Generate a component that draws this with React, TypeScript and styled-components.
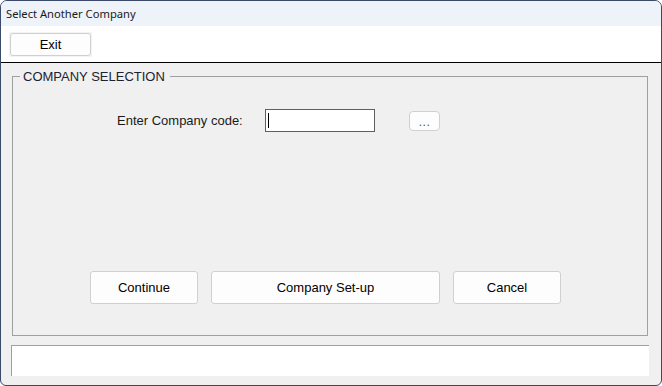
import { createGlobalStyle, styled } from "styled-components";

const GlobalStyle = createGlobalStyle`
	html, body {
		margin: 0;
		padding: 0;
		background: #ffffff;
	}
	* {
		box-sizing: border-box;
	}
`;

const Window = styled.div`
	display: flex;
	flex-direction: column;
	width: 662px;
	height: 386px;
	border: 1px solid #3b4a6b;
	border-radius: 7px 7px 6px 6px;
	overflow: hidden;
	background-color: #f0f0f0;
	font-family: "Liberation Sans", Arial, sans-serif;
	color: #000;
`;

const TitleBar = styled.div`
	display: flex;
	align-items: center;
	height: 25px;
	padding-left: 5px;
	background-color: #eef2f9;
	font-family: "Noto Sans", "Open Sans", sans-serif;
	font-size: 11.2px;
	color: #1a1a1a;
`;

const Toolbar = styled.div`
	display: flex;
	align-items: center;
	height: 37px;
	padding-left: 8px;
	background-color: #fff;
	border-bottom: 1px solid #000;
`;

const ToolButtonWrap = styled.div`
	padding: 1px;
	background-color: #f3f3f3;
`;

const Button = styled.button<{ $w: number; $h: number }>`
	display: flex;
	align-items: center;
	justify-content: center;
	width: ${(p) => p.$w}px;
	height: ${(p) => p.$h}px;
	padding: 0;
	background-color: #fdfdfd;
	border: 1px solid #d0d0d0;
	border-radius: 3px;
	font-family: "Liberation Sans", Arial, sans-serif;
	font-size: 13px;
	color: #000;
`;

const Body = styled.div`
	flex: 1;
	display: flex;
	flex-direction: column;
	padding: 7px 13px 9px 11px;
`;

const GroupBox = styled.fieldset`
	height: 266px;
	margin: 0;
	padding: 0;
	border: 1px solid #a0a0a0;
	border-radius: 0;
`;

const Legend = styled.legend`
	margin-left: 7px;
	padding: 0 5px 0 3px;
	font-size: 13px;
	line-height: 13px;
	color: #1c2233;
`;

const FieldRow = styled.div`
	display: flex;
	align-items: center;
	margin-top: 26px;
	padding-left: 104px;
`;

const Label = styled.label`
	width: 148px;
	font-size: 13px;
	color: #1a1a1a;
`;

const CodeInput = styled.div`
	position: relative;
	width: 110px;
	height: 23px;
	background-color: #fff;
	border: 1px solid #5f5f5f;
`;

const Caret = styled.span`
	position: absolute;
	left: 2px;
	top: 3px;
	width: 1px;
	height: 15px;
	background-color: #000;
`;

const DotsButton = styled.button`
	display: flex;
	align-items: flex-end;
	justify-content: center;
	width: 31px;
	height: 20px;
	margin-left: 34px;
	padding: 0 0 4px;
	background-color: #fdfdfd;
	border: 1px solid #d0d0d0;
	border-radius: 4px;
	font-family: "Liberation Sans", Arial, sans-serif;
	font-size: 12px;
	line-height: 8px;
	letter-spacing: 0.5px;
	color: #2b5797;
`;

const ButtonRow = styled.div`
	display: flex;
	gap: 13px;
	margin-top: 139px;
	padding-left: 77px;
`;

const StatusPanel = styled.div`
	height: 31px;
	margin-top: 9px;
	margin-left: -1px;
	margin-right: -1px;
	background-color: #fff;
	border-top: 1px solid #a0a0a0;
	border-left: 1px solid #a0a0a0;
`;

export default function App() {
	return (
		<>
			<GlobalStyle />
			<Window>
				<TitleBar>Select Another Company</TitleBar>
				<Toolbar>
					<ToolButtonWrap>
						<Button $w={81} $h={23}>Exit</Button>
					</ToolButtonWrap>
				</Toolbar>
				<Body>
					<GroupBox>
						<Legend>COMPANY SELECTION</Legend>
						<FieldRow>
							<Label>Enter Company code:</Label>
							<CodeInput>
								<Caret />
							</CodeInput>
							<DotsButton>...</DotsButton>
						</FieldRow>
						<ButtonRow>
							<Button $w={108} $h={33}>Continue</Button>
							<Button $w={229} $h={33}>Company Set-up</Button>
							<Button $w={108} $h={33}>Cancel</Button>
						</ButtonRow>
					</GroupBox>
					<StatusPanel />
				</Body>
			</Window>
		</>
	);
}
